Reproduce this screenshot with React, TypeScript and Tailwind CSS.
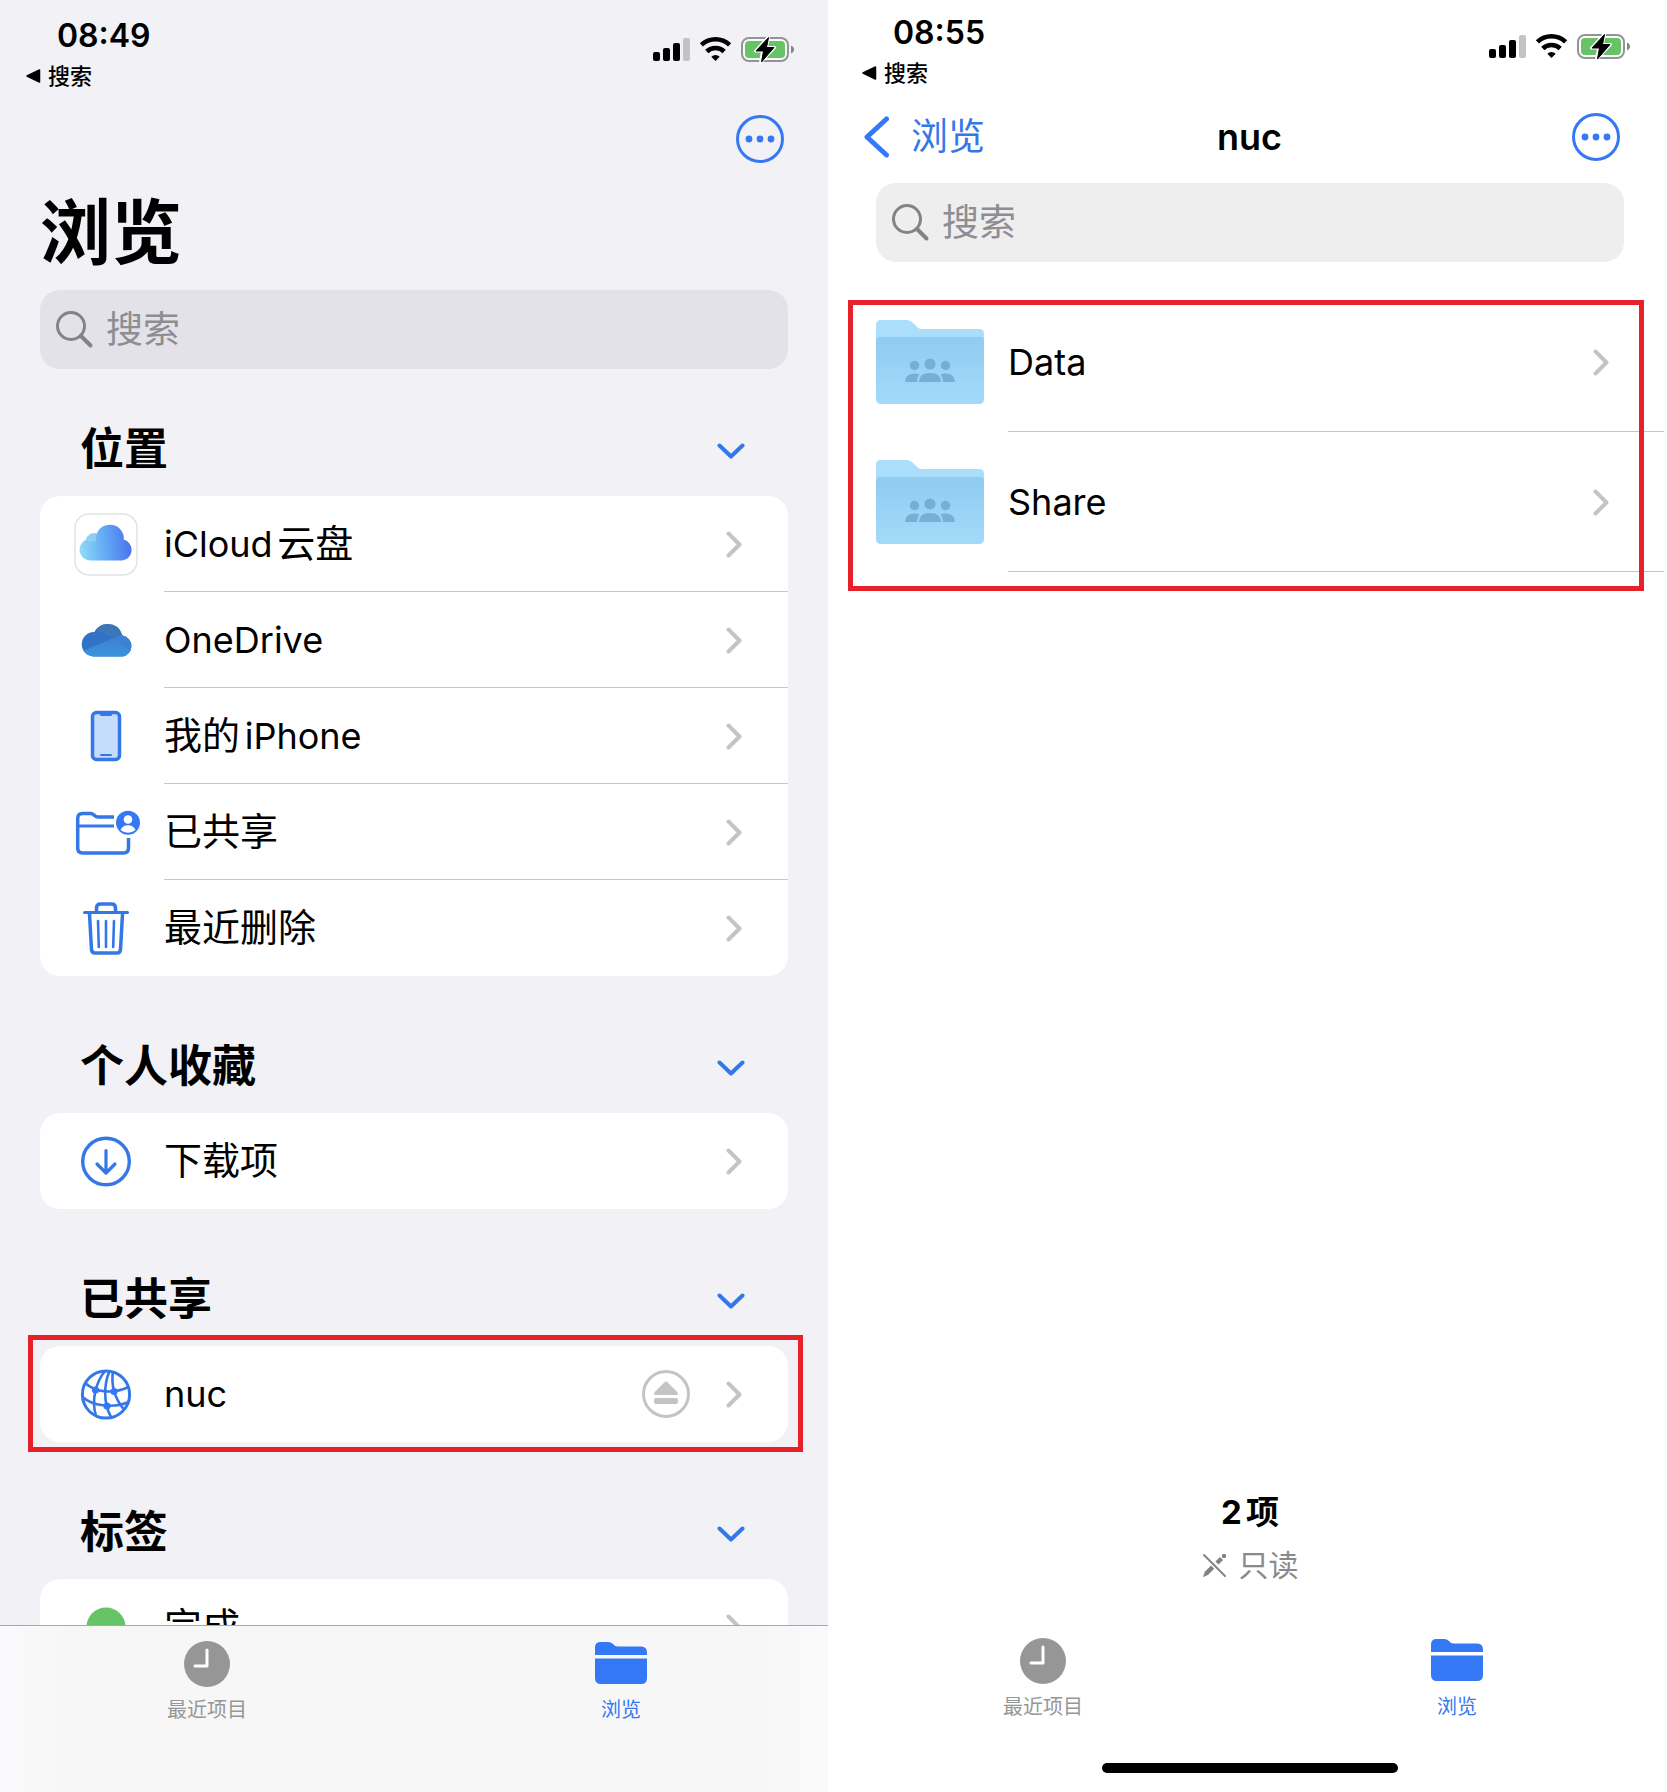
import { ReactNode } from "react";

const FONT = "font-['Inter','Noto_Sans_CJK_SC',sans-serif]";

/* ---------- status bar glyphs ---------- */

function StatusIcons() {
  return (
    <svg width="142" height="28" viewBox="0 0 142 28" aria-hidden="true">
      <rect x="0" y="16" width="7" height="9" rx="2" />
      <rect x="10" y="12" width="7" height="13" rx="2" />
      <rect x="20" y="7" width="7" height="18" rx="2" />
      <rect x="30" y="2" width="7" height="23" rx="2" fill="#c3c3c6" />
      <g fill="none" stroke="#000" strokeWidth="4.6">
        <path d="M48.4 8.9a20.6 20.6 0 0 1 28.2 0" />
        <path d="M53.8 15.500a12.6 12.6 0 0 1 17.4 0" />
      </g>
      <path d="M62.5 25l-4.2-4.3a6 6 0 0 1 8.4 0z" />
      <rect x="89" y="2" width="46" height="23" rx="7" fill="#fff" fillOpacity="0.6" stroke="#949398" strokeWidth="2" />
      <rect x="92" y="5" width="40" height="17" rx="4" fill="#67c466" />
      <path d="M138 9.5c4 1.5 4 6.500 0 8z" fill="#858589" />
      <path d="M115.500 1L102.500 15h7l-2 11.500 14-15h-8z" stroke="#fff" strokeWidth="3" strokeLinejoin="round" />
      <path d="M115.500 1.500L103 15h7.500l-2 11 12.500-14.500h-7.500z" stroke="#000" strokeLinejoin="round" />
    </svg>
  );
}

function StatusBar({ time }: { time: string }) {
  return (
    <div className="flex justify-between pr-[33px] pl-[26px]">
      <div>
        <p className="pl-[31px] text-[32px] leading-10 font-semibold">{time}</p>
        <a href="#search" className="mt-2 flex items-center gap-[7px] text-[22px] leading-6 font-medium">
          <svg width="15" height="14" viewBox="0 0 15 14" aria-hidden="true">
            <path d="M13.500 1v12L1 7z" stroke="#000" strokeLinejoin="round" strokeWidth="1.500" />
          </svg>
          搜索
        </a>
      </div>
      <div className="pt-5">
        <StatusIcons />
      </div>
    </div>
  );
}

/* ---------- shared controls ---------- */

function MoreButton() {
  return (
    <button type="button" aria-label="更多" className="size-12">
      <svg width="48" height="48" viewBox="0 0 48 48" fill="#3478f6">
        <circle cx="24" cy="24" r="22.500" fill="none" stroke="#3478f6" strokeWidth="3" />
        <circle cx="13" cy="24" r="3.400" />
        <circle cx="24" cy="24" r="3.400" />
        <circle cx="35" cy="24" r="3.400" />
      </svg>
    </button>
  );
}

function SearchBox({ id, tone }: { id: string; tone: string }) {
  return (
    <label htmlFor={id} className={`mx-10 flex h-[79px] items-center gap-3 rounded-[20px] pl-4 ${tone}`}>
      <svg width="38" height="38" viewBox="0 0 38 38" fill="none" stroke="#838387" aria-hidden="true">
        <circle cx="15" cy="15" r="13.500" strokeWidth="3" />
        <path d="M25 25L34.500 34.500" strokeWidth="4" strokeLinecap="round" />
      </svg>
      <input
        id={id}
        type="search"
        placeholder="搜索"
        className="min-w-0 flex-1 bg-transparent text-[37px] leading-[56px] outline-none placeholder:text-[#8d8d92]"
      />
    </label>
  );
}

/* Chinese runs are set slightly larger than Latin ones. */
function MixedLabel({ text }: { text: string }) {
  return (
    <>
      {text.split(/([A-Za-z]+)/).filter(Boolean).map((run) => (
        <span key={run} className={/[A-Za-z]/.test(run) ? "text-[36px]" : "text-[38px]"}>
          {run}
        </span>
      ))}
    </>
  );
}

function ChevronRight() {
  return (
    <svg width="18" height="28" viewBox="0 0 18 28" fill="none" stroke="#c4c4c6" strokeWidth="4" strokeLinecap="round" strokeLinejoin="round" className="shrink-0" aria-hidden="true">
      <path d="M3.500 3.500L14.500 14.500 3.500 25.500" />
    </svg>
  );
}

function ClockIcon() {
  return (
    <svg width="46" height="46" viewBox="0 0 46 46" aria-hidden="true">
      <circle cx="23" cy="23" r="23" fill="#969696" />
      <path d="M23 9v16H11" fill="none" stroke="#fff" strokeWidth="3" strokeLinecap="round" strokeLinejoin="round" />
    </svg>
  );
}

function FolderIcon() {
  return (
    <svg width="52" height="46" viewBox="0 0 52 46" fill="#3478f6" aria-hidden="true">
      <path d="M0 14V6.500Q0 1 5.500 1H13q3 0 5 2l1 1q1.500 1.500 4 1.500h23q6 0 6 6V14z" />
      <path d="M0 17.500h52V37q0 6-6 6H6q-6 0-6-6z" />
    </svg>
  );
}

function TabBar({ tone, children }: { tone: string; children?: ReactNode }) {
  return (
    <nav className={`relative z-10 shrink-0 ${tone}`}>
      <div className="grid grid-cols-2 text-[20px] leading-6">
        <a href="#recents" className="flex flex-col items-center gap-[11px] text-[#969696]">
          <ClockIcon />
          最近项目
        </a>
        <a href="#browse" aria-current="page" className="flex flex-col items-center gap-[11px] text-[#3478f6]">
          <FolderIcon />
          浏览
        </a>
      </div>
      {children}
    </nav>
  );
}

/* ---------- row icons, 64 x 64 ---------- */

function IconFrame({ children }: { children: ReactNode }) {
  return (
    <svg width="64" height="64" viewBox="0 0 64 64" fill="none" stroke="#3478e8" strokeWidth="3.500" strokeLinecap="round" strokeLinejoin="round" className="shrink-0 overflow-visible" aria-hidden="true">
      {children}
    </svg>
  );
}

function ICloudIcon() {
  return (
    <IconFrame>
      <defs>
        <linearGradient id="icloud" x1="6" y1="40" x2="58" y2="34" gradientUnits="userSpaceOnUse">
          <stop offset="0" stopColor="#8fdcf8" />
          <stop offset="0.500" stopColor="#62a9f4" />
          <stop offset="1" stopColor="#4a71ee" />
        </linearGradient>
      </defs>
      <rect x="1" y="2" width="62" height="61" rx="14" fill="#fff" stroke="#e4e4e6" strokeWidth="1.500" />
      <path
        stroke="none"
        fill="url(#icloud)"
        d="M16 48.500A10.800 10.800 0 0 1 12 27.800 8.300 8.300 0 0 1 22.800 21.600 14 14 0 0 1 49.800 27.600 10.700 10.700 0 0 1 48.500 48.500z"
      />
      <path d="M12 27.800A8.300 8.300 0 0 1 22.800 21.600Q21.500 25 22 29q-5 2-10-1.200z" fill="#a6dcf5" fillOpacity="0.500" stroke="none" />
    </IconFrame>
  );
}

function OneDriveIcon() {
  return (
    <IconFrame>
      <defs>
        <clipPath id="od">
          <path d="M19.500 48.500A12 12 0 1 1 20.500 24Q25 16 33.500 16 45 16 48.500 27.500A10.600 10.600 0 0 1 48 48.500z" />
        </clipPath>
        <linearGradient id="odFace" x1="0" y1="0" x2="0" y2="1">
          <stop offset="0" stopColor="#3a84d2" />
          <stop offset="1" stopColor="#3b97e0" />
        </linearGradient>
      </defs>
      <g clipPath="url(#od)" stroke="none">
        <rect width="64" height="64" fill="#2f72c8" />
        <path d="M18 24.500q7-2.500 14 2l9 5 10-5V10H18z" fill="#3b76b9" />
        <path d="M38 31.500q7-5 12-4.500l10 0v22z" fill="#3c82d0" />
        <path d="M8 43.500l30-13 24 15v8H8z" fill="url(#odFace)" />
      </g>
    </IconFrame>
  );
}

function PhoneIcon() {
  return (
    <IconFrame>
      <rect x="18.500" y="8.500" width="27" height="47" rx="4" fill="#c6dcfb" />
      <path d="M26 9h12v1.500q0 1.500-1.500 1.500h-9Q26 12 26 10.500z" fill="#3478e8" stroke="none" />
      <path d="M27 51h10" strokeWidth="2" />
    </IconFrame>
  );
}

function SharedFolderIcon() {
  return (
    <IconFrame>
      <g strokeWidth="3.500" strokeLinecap="butt">
        <path d="M40 17H24q-2 0-3.500-1.500T17.500 13.600H8.500q-4.800 0-4.800 4.800V48q0 5 5 5H49.500q5 0 5-5V38" />
        <path d="M4 26h36" strokeWidth="3" />
      </g>
      <g stroke="none">
        <circle cx="54" cy="22.800" r="12" fill="#3478f6" />
        <circle cx="54" cy="19.500" r="4.300" fill="#fff" />
        <path d="M46.500 30q2-4.800 7.500-4.800t7.500 4.800q-3.400 2.800-7.500 2.800t-7.500-2.800z" fill="#fff" />
      </g>
    </IconFrame>
  );
}

function TrashIcon() {
  return (
    <IconFrame>
      <path d="M10.500 16.500h43" strokeWidth="3" />
      <path d="M22.500 16v-4q0-4 4-4h11q4 0 4 4v4" strokeWidth="3.500" />
      <path d="M15.500 18l2 35.500q.3 3.500 3.500 3.500h22q3.200 0 3.500-3.500l2-35.500" />
      <path d="M24 25l.800 26M32 25v26M40 25l-.8 26" strokeWidth="2.600" />
    </IconFrame>
  );
}

function DownloadIcon() {
  return (
    <IconFrame>
      <circle cx="32" cy="32.500" r="23.300" strokeWidth="3.400" />
      <path d="M32 21.500v22M23 35l9 9 9-9" strokeWidth="3.200" />
    </IconFrame>
  );
}

function GlobeIcon() {
  return (
    <IconFrame>
      <circle cx="32" cy="32.500" r="23.600" strokeWidth="3" />
      <g strokeWidth="2.600" strokeLinecap="butt">
        <path d="M31 9C22 20 17 38 22 54" />
        <path d="M35.500 9C30 22 29 41 37 55" />
        <path d="M39 9.500C37 22 40 35 49.500 47" />
        <path d="M11 21C22 31 40 32 54.500 25" />
        <path d="M8.500 35C18 43.500 38 47 55 40" />
      </g>
      <g fill="#3478f6" stroke="none">
        <circle cx="21.500" cy="28" r="3.600" />
        <circle cx="40" cy="29.500" r="3.600" />
        <circle cx="33" cy="44" r="3.600" />
      </g>
    </IconFrame>
  );
}

function TagIcon() {
  return (
    <IconFrame>
      <circle cx="32" cy="32" r="19.500" fill="#67c466" stroke="none" />
    </IconFrame>
  );
}

function EjectButton() {
  return (
    <button type="button" aria-label="推出" className="mr-[35px] size-12 shrink-0">
      <svg width="48" height="48" viewBox="0 0 48 48" fill="#c4c4c6">
        <circle cx="24" cy="24" r="22.500" fill="none" stroke="#c4c4c6" strokeWidth="3" />
        <path d="M22.500 12.200q1.500-1.400 3 0L35.300 22q1.800 3-1 3H13.700q-2.800 0-1-3z" />
        <rect x="12" y="28" width="24" height="6" rx="2" />
      </svg>
    </button>
  );
}

/* ---------- left screen ---------- */

type Item = { label: string; icon: ReactNode; eject?: boolean };
type Group = { title: string; items: Item[]; marked?: boolean };

const groups: Group[] = [
  {
    title: "位置",
    items: [
      { label: "iCloud云盘", icon: <ICloudIcon /> },
      { label: "OneDrive", icon: <OneDriveIcon /> },
      { label: "我的iPhone", icon: <PhoneIcon /> },
      { label: "已共享", icon: <SharedFolderIcon /> },
      { label: "最近删除", icon: <TrashIcon /> },
    ],
  },
  { title: "个人收藏", items: [{ label: "下载项", icon: <DownloadIcon /> }] },
  { title: "已共享", marked: true, items: [{ label: "nuc", icon: <GlobeIcon />, eject: true }] },
  { title: "标签", items: [{ label: "完成", icon: <TagIcon /> }] },
];

function GroupSection({ group }: { group: Group }) {
  return (
    <section>
      <div className="flex items-center justify-between pt-[60px] pr-[43px] pb-[17px] pl-10">
        <h2 className="text-[44px] leading-[60px] font-bold">{group.title}</h2>
        <button type="button" aria-label={`折叠${group.title}`} className="p-0 pt-1">
          <svg width="28" height="18" viewBox="0 0 28 18" fill="none" stroke="#3478e8" strokeWidth="4" strokeLinecap="round" strokeLinejoin="round">
            <path d="M2.500 3.500L14 14.500 25.500 3.500" />
          </svg>
        </button>
      </div>
      <div className="relative">
        <ul className="rounded-[20px] bg-white">
          {group.items.map((item) => (
            <li key={item.label} className="group flex h-24 items-center pl-[34px]">
              {item.icon}
              <div className="ml-[26px] flex h-full flex-1 items-center border-b border-[#c6c6c8] pr-[45px] group-last:border-transparent">
                <a href="#folder" className="flex-1 text-[36px] leading-[56px] [text-autospace:normal]">
                  <MixedLabel text={item.label} />
                </a>
                {item.eject && <EjectButton />}
                <ChevronRight />
              </div>
            </li>
          ))}
        </ul>
        {group.marked && (
          <div className="pointer-events-none absolute -top-[11px] -right-[15px] -bottom-[10px] -left-3 border-[5px] border-[#e62129]" />
        )}
      </div>
    </section>
  );
}

function BrowseScreen() {
  return (
    <main className="flex min-w-0 flex-1 flex-col bg-[#f1f1f6] pt-4">
      <div className="min-h-0 flex-1 overflow-hidden">
        <StatusBar time="08:49" />
        <div className="mt-[27px] flex justify-end pr-11">
          <MoreButton />
        </div>
        <h1 className="mt-[21px] mb-[10px] pl-10 text-[71px] leading-[96px] font-bold">浏览</h1>
        <SearchBox id="browse-search" tone="bg-[#e3e2e8]" />
        <div className="-mt-[10px] px-10">
          {groups.map((group) => (
            <GroupSection key={group.title} group={group} />
          ))}
        </div>
      </div>
      <TabBar tone="border-t border-[#a9a9ab] bg-[linear-gradient(to_right,#fafafc,#f7f7f7_8%,#f7f7f7_92%,#fafafc)] pt-[15px] pb-[70px]" />
    </main>
  );
}

/* ---------- right screen ---------- */

function SharedFolder({ id }: { id: string }) {
  return (
    <svg width="108" height="84" viewBox="0 0 108 84" className="shrink-0" aria-hidden="true">
      <defs>
        <linearGradient id={id} x1="0" y1="0" x2="0" y2="1">
          <stop offset="0" stopColor="#8fccf1" />
          <stop offset="1" stopColor="#a3daf9" />
        </linearGradient>
      </defs>
      <path d="M0 30V5q0-5 5-5h26q3 0 5.500 2.500l3 3Q42.500 9 46 9h57q5 0 5 5v16z" fill="#abdefb" />
      <path d="M0 21q0-4 4-4h100q4 0 4 4v58q0 5-5 5H5q-5 0-5-5z" fill={`url(#${id})`} />
      <g fill="#76aed5">
        <circle cx="38.500" cy="45.500" r="4.700" />
        <circle cx="69.500" cy="45.500" r="4.700" />
        <circle cx="54" cy="44" r="5.500" />
        <path d="M43 62q0-9 11-9t11 9z" />
        <path d="M29 62q0-8.500 10-8.500 2.500 0 4.500.8Q41 57 41.200 62z" />
        <path d="M79 62q0-8.500-10-8.500-2.500 0-4.500.8Q67 57 66.800 62z" />
      </g>
    </svg>
  );
}

function FolderScreen() {
  return (
    <main className="flex min-w-0 flex-1 flex-col bg-white pt-[13px]">
      <StatusBar time="08:55" />
      <header className="mt-[27px] grid grid-cols-3 items-center pr-11 pl-[27px]">
        <a href="#browse" className="flex items-center gap-[21px] text-[37px] leading-[50px] text-[#3478e8]">
          <svg width="27" height="42" viewBox="0 0 27 42" fill="none" stroke="#3478f6" strokeWidth="5" strokeLinecap="round" strokeLinejoin="round" aria-hidden="true">
            <path d="M23.500 3L4 21l19.500 18" />
          </svg>
          浏览
        </a>
        <h1 className="pl-4 text-center text-[36px] leading-[48px] font-semibold">nuc</h1>
        <div className="flex h-12 justify-end">
          <MoreButton />
        </div>
      </header>
      <div className="mt-[21px]">
        <SearchBox id="folder-search" tone="bg-[#eeeeef]" />
      </div>
      <div className="relative mt-[30px]">
        <ul>
          {["Data", "Share"].map((name) => (
            <li key={name}>
              <a href="#folder" className="flex h-[140px] items-center pl-10">
                <SharedFolder id={`front-${name}`} />
                <span className="ml-6 flex h-full flex-1 items-center justify-between border-b border-[#c6c6c8] pr-[54px] text-[36px]">
                  {name}
                  <ChevronRight />
                </span>
              </a>
            </li>
          ))}
        </ul>
        <div className="pointer-events-none absolute top-2 right-5 -bottom-[19px] left-3 border-[5px] border-[#e62129]" />
      </div>
      <div className="flex flex-1 flex-col items-center justify-end pb-[37px]">
        <p className="text-[33px] leading-10 font-bold [text-autospace:normal]">2项</p>
        <p className="mt-[13px] flex items-center gap-3 text-[30px] leading-10 text-[#8a8a8e]">
          <svg width="25" height="25" viewBox="0 0 25 25" fill="none" stroke="#838387" aria-hidden="true">
            <path d="M2 2l21 21" strokeWidth="2" strokeLinecap="round" />
            <path d="M.8 24.200L3 18.500l6-6 3.200 3.200-6 6z" fill="#838387" stroke="none" />
            <path d="M15 10l4.500-4.500" strokeWidth="4.500" />
            <circle cx="22" cy="3" r="2.200" fill="#838387" stroke="none" />
          </svg>
          只读
        </p>
      </div>
      <TabBar tone="pt-4 pb-[19px]">
        <div className="mx-auto mt-11 h-[10px] w-[296px] rounded-full bg-black" />
      </TabBar>
    </main>
  );
}

export default function App() {
  return (
    <div className={`flex h-screen gap-2 bg-white pr-[3px] text-black antialiased ${FONT}`}>
      <BrowseScreen />
      <FolderScreen />
    </div>
  );
}
